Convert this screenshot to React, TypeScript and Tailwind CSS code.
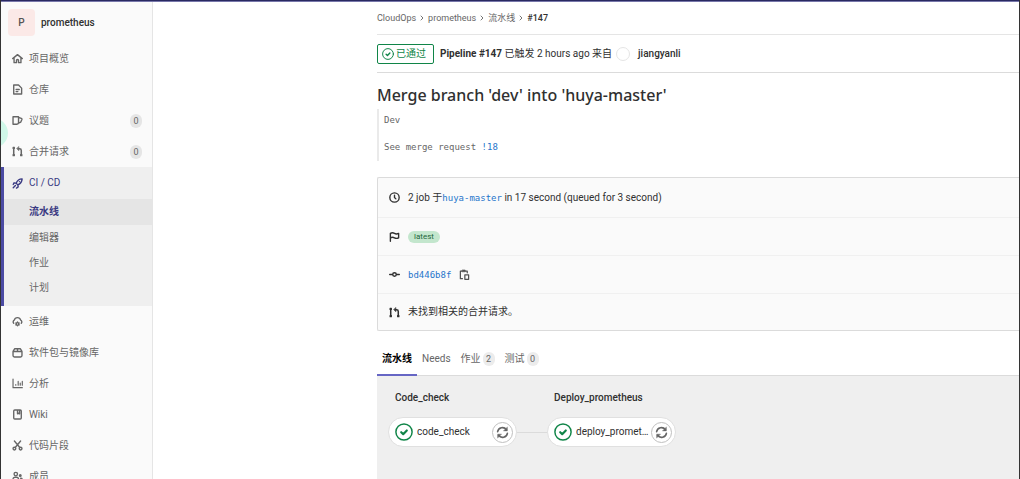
import type { ReactNode } from "react";

type IconProps = { className?: string };

function Svg({ className = "size-3", children }: IconProps & { children: ReactNode }) {
  return (
    <svg
      viewBox="0 0 16 16"
      className={`${className} shrink-0`}
      fill="none"
      stroke="currentColor"
      strokeWidth="2"
      strokeLinecap="round"
      strokeLinejoin="round"
      aria-hidden="true"
    >
      {children}
    </svg>
  );
}

const HomeIcon = (p: IconProps) => (
  <Svg {...p}>
    <path d="M1 8.2 8 2.4l7 5.8M3 7.5V14h3.5v-3a1.5 1.5 0 0 1 3 0v3H13V7.5" />
  </Svg>
);

const DocIcon = (p: IconProps) => (
  <Svg {...p}>
    <path d="M2.5 1.5h7L14 6v8.5H2.5zM6 8h4.5M6 11h2.5" />
  </Svg>
);

const IssuesIcon = (p: IconProps) => (
  <Svg {...p}>
    <path d="M1.5 2.5h8V11A2.5 2.5 0 0 1 7 13.5H1.5zM9.5 3.5l4 1.3a1.4 1.4 0 0 1 .9 1.8l-1.6 3.6-3.3 1.6" />
  </Svg>
);

const MergeIcon = (p: IconProps) => (
  <Svg {...p}>
    <path d="M2.5 3v10M10 4h1a2.500 2.500 0 0 1 2.500 2.500V13" strokeWidth="2.2" />
    <path d="M10 1.2v5.600L7 4z" fill="currentColor" strokeWidth="0.8" />
    <path d="M1.5 2h2v1.500h-2zM1.500 12.500h2V14h-2zM12.500 12.500h2V14h-2z" fill="currentColor" strokeWidth="1.5" />
  </Svg>
);

const RocketIcon = (p: IconProps) => (
  <Svg {...p}>
    <path d="M6 7.5C7.5 4 10.5 1.5 14.7 1.3 14.5 5.5 12 8.5 8.5 10zM6 7.5 3 7 1.8 9.5M8.5 10l.5 3-2.5 1.7" />
    <path d="M10.8 5.2h.01M1.8 14.2l3.2-3.2" />
  </Svg>
);

const OperationsIcon = (p: IconProps) => (
  <Svg {...p}>
    <path d="M2.5 10.5A2.8 2.8 0 0 1 3.3 6 4.8 4.8 0 0 1 12.6 6 2.8 2.8 0 0 1 13.5 10.5" />
    <circle cx="8" cy="11.5" r="1.8" />
    <path d="M8 8.8v.3M8 14v.3M5.6 10.1l.2.1M10.2 12.8l.2.1M5.6 12.9l.2-.1M10.2 10.2l.2-.1" />
  </Svg>
);

const PackageIcon = (p: IconProps) => (
  <Svg {...p}>
    <path d="M1.5 6.5h13v6a2 2 0 0 1-2 2h-9a2 2 0 0 1-2-2zM1.5 6.5l2.5-4h8l2.5 4M8 2.5v4" />
  </Svg>
);

const ChartIcon = (p: IconProps) => (
  <Svg {...p}>
    <path d="M1.5 1.5V14H15M5.5 9.5v1M9 5v5.5M12 7.5v3M15 5v5.5" strokeWidth="1.7" />
  </Svg>
);

const BookIcon = (p: IconProps) => (
  <Svg {...p}>
    <path d="M2.5 3A1.5 1.5 0 0 1 4 1.5h8A1.5 1.5 0 0 1 13.5 3v10a1.5 1.5 0 0 1-1.5 1.5H4A1.5 1.5 0 0 1 2.5 13zM8 2v5l1.5-1L11 7V2" />
  </Svg>
);

const ScissorsIcon = (p: IconProps) => (
  <Svg {...p}>
    <path d="M3.5 1.5 11 10.5M12.5 1.5 5 10.5" />
    <circle cx="3.5" cy="12.5" r="2" />
    <circle cx="12.5" cy="12.5" r="2" />
  </Svg>
);

const MembersIcon = (p: IconProps) => (
  <Svg {...p}>
    <circle cx="5.5" cy="4.5" r="2.5" />
    <path d="M1.5 14v-2a3 3 0 0 1 3-3h2a3 3 0 0 1 3 3v2zM12.5 10.5c1.5 0 2.5 1 2.5 2.3V14h-2" />
    <circle cx="12" cy="6.5" r="1.2" />
  </Svg>
);

const ClockIcon = (p: IconProps) => (
  <Svg {...p}>
    <circle cx="8" cy="8" r="6.8" />
    <path d="M8 4.5V8l2 2" />
  </Svg>
);

const FlagIcon = (p: IconProps) => (
  <Svg {...p}>
    <path d="M2 15V3.5c2.5-1.5 4.5-.9 6 0s3.500 1.200 6 0V10c-2.500 1.200-4.500.9-6 0s-3.500-1.300-6 0" />
  </Svg>
);

const CommitIcon = (p: IconProps) => (
  <Svg {...p}>
    <circle cx="8" cy="8" r="2.6" />
    <path d="M1 8h4M11 8h4" />
  </Svg>
);

const CopyIcon = (p: IconProps) => (
  <Svg {...p}>
    <path d="M5 14H2V3h2.5M9.5 3H12v2.5" strokeWidth="1.8" />
    <path d="M5 1.5h4V4H5z" fill="currentColor" strokeWidth="1" />
    <path d="M8.5 8.5H14V15H8.5z" strokeWidth="1.8" />
  </Svg>
);

const RetryIcon = (p: IconProps) => (
  <Svg {...p}>
    <path d="M2 7a6 6 0 0 1 10.8-2.5M14 9a6 6 0 0 1-10.8 2.5" />
    <path d="M14 1.5V6H9.5zM2 14.5V10h4.5z" fill="currentColor" strokeWidth="0.5" />
  </Svg>
);

const ChevronIcon = (p: IconProps) => (
  <Svg {...p}>
    <path d="m6 4 4 4-4 4" strokeWidth="1.8" />
  </Svg>
);

const CheckCircleIcon = (p: IconProps) => (
  <Svg {...p}>
    <circle cx="8" cy="8" r="7.2" strokeWidth="1.3" />
    <path d="m5.5 8.2 1.8 1.7 3.2-3.3" strokeWidth="1.9" />
  </Svg>
);

const navTop = [
  { label: "项目概览", icon: HomeIcon },
  { label: "仓库", icon: DocIcon },
  { label: "议题", icon: IssuesIcon, count: 0 },
  { label: "合并请求", icon: MergeIcon, count: 0 },
];

const navBottom = [
  { label: "运维", icon: OperationsIcon },
  { label: "软件包与镜像库", icon: PackageIcon },
  { label: "分析", icon: ChartIcon },
  { label: "Wiki", icon: BookIcon },
  { label: "代码片段", icon: ScissorsIcon },
  { label: "成员", icon: MembersIcon },
];

const stages = [
  { name: "Code_check", job: "code_check" },
  { name: "Deploy_prometheus", job: "deploy_prometheus" },
];

const tabs = [
  { label: "流水线", active: true },
  { label: "Needs" },
  { label: "作业", count: 2 },
  { label: "测试", count: 0 },
];

function NavItem({ label, icon: Icon, count }: { label: string; icon: (p: IconProps) => ReactNode; count?: number }) {
  return (
    <li>
      <a href="#" className="flex h-[31px] items-center pr-2.5 pl-[11px] text-[#666]">
        <Icon className="size-[11px]" />
        <span className="ml-1.5">{label}</span>
        {count !== undefined && (
          <span className="ml-auto flex h-3.5 w-3 items-center justify-center rounded-full bg-[#e5e5e5] text-[9px]">
            {count}
          </span>
        )}
      </a>
    </li>
  );
}

function Sidebar() {
  return (
    <aside className="w-[152px] shrink-0 overflow-hidden border-r border-[#e5e5e5] bg-[#fafafa]">
      <a href="#" className="flex h-[41px] items-center pl-[7px] font-medium text-[#303030]">
        <span className="mr-1.5 flex size-[27px] items-center justify-center rounded-sm bg-[#fbe9e7] text-[#555]">
          P
        </span>
        prometheus
      </a>
      <ul>
        {navTop.map((item) => (
          <NavItem key={item.label} {...item} />
        ))}
        <li className="border-l-[3px] border-[#4b4ba3] bg-[#efefef] pb-1.5">
          <a href="#" className="flex h-8 items-center pl-2 text-[#393982]">
            <RocketIcon className="size-[11px]" />
            <span className="ml-1.5">CI / CD</span>
          </a>
          <ul>
            <li>
              <a href="#" className="flex h-[26px] items-center bg-[#e5e5e5] pl-[25px] font-bold text-[#393982]">
                流水线
              </a>
            </li>
            {["编辑器", "作业", "计划"].map((label) => (
              <li key={label}>
                <a href="#" className="flex h-[25px] items-center pl-[25px] text-[#666]">
                  {label}
                </a>
              </li>
            ))}
          </ul>
        </li>
        {navBottom.map((item) => (
          <NavItem key={item.label} {...item} />
        ))}
      </ul>
    </aside>
  );
}

function InfoRow({ icon: Icon, children }: { icon: (p: IconProps) => ReactNode; children: ReactNode }) {
  return (
    <div className="flex h-[38px] items-center border-b border-[#f0f0f0] pl-[11px] first:h-10 last:h-9 last:border-b-0">
      <Icon className="size-[11px]" />
      <div className="ml-2 flex items-center">{children}</div>
    </div>
  );
}

export default function App() {
  return (
    <div className="relative flex h-screen flex-col overflow-hidden border-x border-[#333] bg-white font-[Roboto,'Noto_Sans_CJK_SC',sans-serif] text-[10px] leading-4 text-[#303030]">
      <div className="h-0.5 shrink-0 border-b border-[#7777aa] bg-[#292961]" />
      <div className="flex min-h-0 flex-1">
        <Sidebar />

        <main className="flex min-w-0 flex-1 flex-col pl-56">
          {/* Breadcrumbs */}
          <nav className="flex h-[33px] shrink-0 items-center gap-0.5 border-b border-[#e5e5e5] text-[9px] text-[#666]">
            <a href="#">CloudOps</a>
            <ChevronIcon className="size-2" />
            <a href="#">prometheus</a>
            <ChevronIcon className="size-2" />
            <a href="#">流水线</a>
            <ChevronIcon className="size-2" />
            <a href="#" className="font-medium text-[#303030]">#147</a>
          </nav>

          {/* Pipeline status */}
          <header className="flex h-[38px] shrink-0 items-center border-b border-[#dbdbdb]">
            <a
              href="#"
              className="mr-1.5 flex h-5 items-center gap-0.5 rounded-xs border border-[#108548] px-1 pr-[7px] text-[#108548]"
            >
              <CheckCircleIcon className="size-3" />
              已通过
            </a>
            <p>
              <strong className="font-bold">Pipeline #147</strong> 已触发 2 hours ago 来自
            </p>
            <span className="mr-2 ml-1 size-3.5 rounded-full border border-[#e5e5e5]" />
            <a href="#" className="font-medium">jiangyanli</a>
          </header>

          {/* Commit message */}
          <h3 className="mt-3 font-['Noto_Sans',sans-serif] text-base leading-5 font-medium">
            Merge branch 'dev' into 'huya-master'
          </h3>
          <div className="mt-1 flex flex-col gap-[13px] border-l-2 border-[#eaeaea] pt-1 pb-[7px] pl-[5px] font-['DejaVu_Sans_Mono',monospace] text-[9px] leading-3.5 text-[#666]">
            <p>Dev</p>
            <p>
              See merge request <a href="#" className="text-[#1f75cb]">!18</a>
            </p>
          </div>

          {/* Pipeline info */}
          <section className="mt-4 shrink-0 rounded-l-xs border border-r-0 border-[#dbdbdb] bg-[#fafafa]">
            <InfoRow icon={ClockIcon}>
              <p>
                2 job 于
                <a href="#" className="font-['DejaVu_Sans_Mono',monospace] text-[9px] text-[#1f75cb]">huya-master</a>
                {" "}in 17 second (queued for 3 second)
              </p>
            </InfoRow>
            <InfoRow icon={FlagIcon}>
              <span className="rounded-full bg-[#c3e6cd] px-1.5 text-[8px] leading-3 text-[#24663b]">latest</span>
            </InfoRow>
            <InfoRow icon={CommitIcon}>
              <a href="#" className="font-['DejaVu_Sans_Mono',monospace] text-[9px] text-[#1f75cb]">bd446b8f</a>
              <button type="button" aria-label="Copy commit SHA" className="ml-2 text-[#525252]">
                <CopyIcon className="size-[11px]" />
              </button>
            </InfoRow>
            <InfoRow icon={MergeIcon}>未找到相关的合并请求。</InfoRow>
          </section>

          {/* Tabs */}
          <div className="mt-2.5 flex h-[35px] shrink-0 border-b border-[#dbdbdb]">
            {tabs.map((tab) => (
              <button
                type="button"
                key={tab.label}
                className={
                  tab.active
                    ? "-mb-px flex items-center border-b-2 border-[#6666c4] px-[5px] pt-0.5 font-bold text-black"
                    : "-mb-px flex items-center border-b-2 border-transparent px-[5px] pt-0.5 text-[#666]"
                }
              >
                {tab.label}
                {tab.count !== undefined && (
                  <span className="ml-0.5 flex h-3.5 w-3 items-center justify-center rounded-full bg-[#ececec] text-[9px]">
                    {tab.count}
                  </span>
                )}
              </button>
            ))}
          </div>

          {/* Pipeline graph */}
          <section className="flex flex-1 bg-[#efefef] pt-3.5 pl-[11px]">
            {stages.map((stage, i) => (
              <div key={stage.name} className="flex">
                {i > 0 && <div className="mt-[42px] h-px w-[30px] bg-[#dbdbdb]" />}
                <div className="w-[129px]">
                  <h4 className="pl-[7px] font-medium">{stage.name}</h4>
                  <div className="mt-[11px] flex h-[30px] items-center rounded-full border border-[#e0e0e0] bg-white pr-[3px] pl-1.5">
                    <CheckCircleIcon className="size-[18px] text-[#108548]" />
                    <span className="mr-0.5 ml-1 min-w-0 flex-1 truncate">{stage.job}</span>
                    <button
                      type="button"
                      aria-label="Retry"
                      className="flex size-[21px] shrink-0 items-center justify-center rounded-full border border-[#bfbfbf] text-[#666]"
                    >
                      <RetryIcon className="size-[13px]" />
                    </button>
                  </div>
                </div>
              </div>
            ))}
          </section>
        </main>
      </div>

      {/* Floating handle on the window edge */}
      <div className="absolute top-[118px] -left-[23px] size-[30px] rounded-full bg-[#cff7e8]" />
    </div>
  );
}
